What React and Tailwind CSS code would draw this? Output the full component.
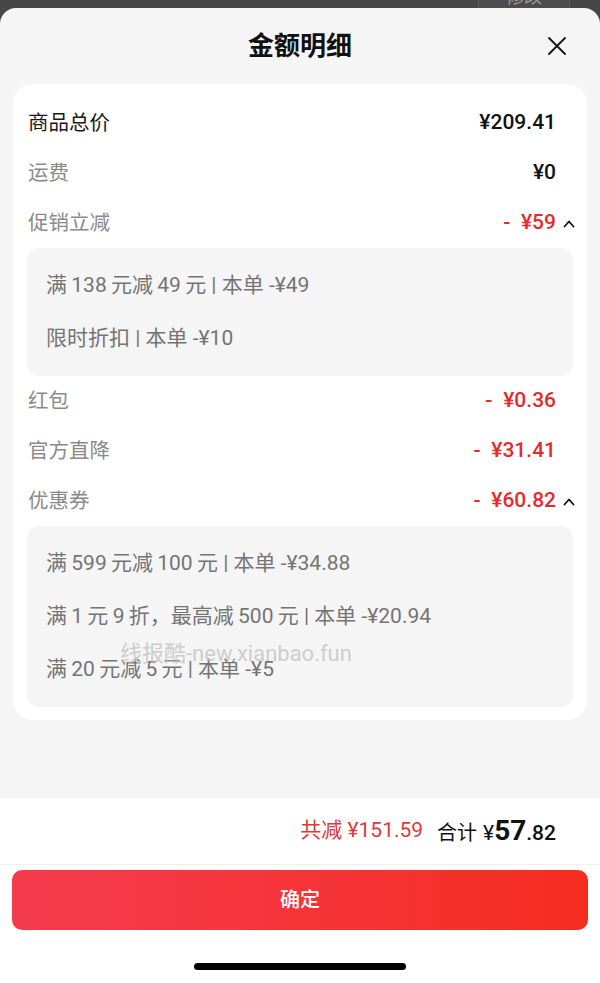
import React from 'react';

const FONT = { fontFamily: 'Roboto, "Noto Sans CJK SC", sans-serif' };

const rows = [
  { label: '商品总价', value: '¥209.41', dark: true },
  { label: '运费', value: '¥0' },
  {
    label: '促销立减',
    value: '-\u2002¥59',
    red: true,
    open: true,
    details: ['满\u2009138\u2009元减\u200949\u2009元 | 本单 -¥49', '限时折扣 | 本单 -¥10'],
  },
  { label: '红包', value: '-\u2002¥0.36', red: true },
  { label: '官方直降', value: '-\u2002¥31.41', red: true },
  {
    label: '优惠券',
    value: '-\u2002¥60.82',
    red: true,
    open: true,
    details: [
      '满\u2009599\u2009元减\u2009100\u2009元 | 本单 -¥34.88',
      '满\u20091\u2009元\u20099\u2009折，最高减\u2009500\u2009元 | 本单 -¥20.94',
      '满\u200920\u2009元减\u20095\u2009元 | 本单 -¥5',
    ],
  },
];

function Chevron() {
  return (
    <svg width="12" height="9" viewBox="0 0 12 9" className="ml-[7px] mr-[-19px]">
      <path d="M1.5 7.5 L6 2.5 L10.5 7.5" fill="none" stroke="#111" strokeWidth="1.8" strokeLinecap="round" strokeLinejoin="round" />
    </svg>
  );
}

function Row({ row }) {
  return (
    <>
      <div className="flex h-[50px] items-center justify-between pl-[15px] pr-[31px]">
        <span className={`text-[20.5px] ${row.dark ? 'text-[#1a1a1a]' : 'text-[#8a8a8a]'}`}>{row.label}</span>
        <span className="flex items-center">
          <span className={`text-[21px] font-medium ${row.red ? 'text-[#e8292b]' : 'text-[#111]'}`}>{row.value}</span>
          {row.open && <Chevron />}
        </span>
      </div>
      {row.details && (
        <div className="mx-[14px] rounded-[12px] bg-[#f5f5f5] py-[11px] pl-[19px]">
          {row.details.map((d) => (
            <div key={d} className="flex h-[53px] items-center text-[21px] text-[#747474]">
              {d}
            </div>
          ))}
        </div>
      )}
    </>
  );
}

export default function App() {
  return (
    <div className="flex h-[983px] w-[600px] flex-col overflow-hidden bg-[#474747]" style={FONT}>
      {/* dimmed page behind the sheet */}
      <div className="flex h-[8px] shrink-0 justify-end pr-[30px]">
        <div className="relative h-[8px] w-[92px] overflow-hidden border-x border-[#5c5c5c] bg-[#4d4d4d]">
          <span className="absolute left-0 right-0 top-[-14px] text-center text-[18px] leading-[22px] text-[#9a9a9a]">修改</span>
        </div>
      </div>

      <div className="flex flex-1 flex-col overflow-hidden rounded-t-[16px] bg-[#f5f5f5]">
        {/* header */}
        <div className="relative flex h-[76px] shrink-0 items-center justify-center">
          <h1 className="text-[26px] font-semibold text-[#111]">金额明细</h1>
          <svg width="20" height="20" viewBox="0 0 20 20" className="absolute right-[33px] top-[28px]">
            <path d="M2 2 L18 18 M18 2 L2 18" stroke="#111" strokeWidth="1.8" strokeLinecap="round" />
          </svg>
        </div>

        {/* detail card */}
        <div className="relative mx-[13px] rounded-[20px] bg-white pb-[13px] pt-[14px]">
          {rows.map((r) => (
            <Row key={r.label} row={r} />
          ))}
          <span className="pointer-events-none absolute left-[107px] top-[553px] text-[22px] text-[#c4c4c4] opacity-80">
            线报酷-new.xianbao.fun
          </span>
        </div>

        <div className="flex-1" />

        {/* footer */}
        <div className="shrink-0 bg-white">
          <div className="flex h-[67px] items-center justify-end gap-[14px] border-b border-[#efefef] pr-[44px]">
            <span className="text-[21px] text-[#dc3a3a]">共减 ¥151.59</span>
            <span className="flex items-baseline text-[#111]">
              <span className="text-[20px]">合计</span>
              <span className="ml-[6px] text-[21px]">¥</span>
              <span className="text-[28px] font-bold">57</span>
              <span className="text-[21px] font-medium">.82</span>
            </span>
          </div>
          <div className="px-[12px] pt-[5px]">
            <button className="flex h-[60px] w-full items-center justify-center rounded-[10px] bg-gradient-to-r from-[#f43b4c] to-[#f62c1d] text-[20px] font-medium text-white">
              确定
            </button>
          </div>
          <div className="flex h-[53px] items-end justify-center pb-[13px]">
            <div className="h-[7px] w-[212px] rounded-full bg-black" />
          </div>
        </div>
      </div>
    </div>
  );
}
